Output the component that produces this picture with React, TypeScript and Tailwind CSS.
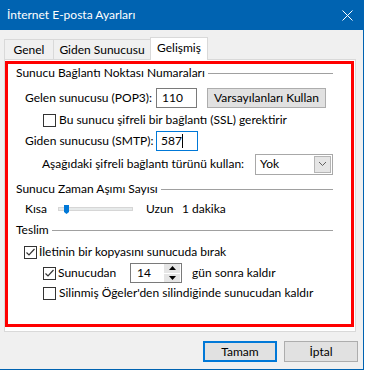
import React from "react";

function Check({ checked }: { checked?: boolean }) {
  return (
    <div className="w-[13px] h-[13px] border border-[#333333] bg-white shrink-0 flex items-center justify-center">
      {checked && (
        <svg width="11" height="11" viewBox="0 0 11 11">
          <polyline points="1.5,5.5 4,8 9.5,2" fill="none" stroke="#333333" strokeWidth="1.2" />
        </svg>
      )}
    </div>
  );
}

function Header({ text }: { text: string }) {
  return (
    <div className="flex items-center h-[16px] ml-[8px] mr-[18px]">
      <span className="whitespace-nowrap">{text}</span>
      <div className="flex-1 h-px bg-[#a0a0a0] ml-[3px]" />
    </div>
  );
}

export default function App() {
  return (
    <div className="w-[365px] h-[371px] bg-white text-[12px] text-black leading-[16px] [font-family:Lato,sans-serif]">
      <div className="w-[364px] h-[370px] bg-[#f0f0f0] border-r border-b border-[#0063b1] flex flex-col">
        {/* Title bar */}
        <div className="h-[30px] bg-[#0063b1] flex items-center justify-between pl-[7px] pr-[10px] text-white">
          <span className="text-[12px]">İnternet E-posta Ayarları</span>
          <svg width="11" height="11" viewBox="0 0 11 11">
            <line x1="0.5" y1="0.5" x2="10.5" y2="10.5" stroke="white" strokeWidth="1" />
            <line x1="10.5" y1="0.5" x2="0.5" y2="10.5" stroke="white" strokeWidth="1" />
          </svg>
        </div>

        <div className="pl-[4px] pt-[7px] flex flex-col">
          {/* Tabs */}
          <div className="flex items-end h-[22px] relative z-10">
            <div className="w-[50px] h-[20px] border-l border-t border-r border-[#d9d9d9] flex items-center justify-center">
              Genel
            </div>
            <div className="w-[97px] h-[20px] border-t border-r border-[#d9d9d9] flex items-center justify-center">
              Giden Sunucusu
            </div>
            <div className="w-[58px] h-[23px] -ml-px -mb-px border-l border-t border-r border-[#d9d9d9] bg-white flex items-center justify-center pb-[3px]">
              Gelişmiş
            </div>
          </div>

          {/* Panel */}
          <div className="w-[352px] h-[273px] border border-[#d9d9d9] bg-white pt-px">
            <div className="w-[349px] h-[266px] border-[3px] border-[#ff0000] flex flex-col">
              <div className="mt-px">
                <Header text="Sunucu Bağlantı Noktası Numaraları" />
              </div>

              {/* Gelen */}
              <div className="mt-[7px] flex items-center h-[20px] pl-[17px]">
                <span className="w-[131px] whitespace-nowrap">Gelen sunucusu (POP3):</span>
                <div className="w-[41px] h-[20px] border border-[#7a7a7a] flex items-center pl-[5px]">110</div>
                <div className="ml-[10px] w-[119px] h-[20px] border border-[#adadad] bg-[#e1e1e1] flex items-center justify-center whitespace-nowrap">
                  Varsayılanları Kullan
                </div>
              </div>

              {/* SSL */}
              <div className="mt-[4px] flex items-center h-[16px] pl-[35px]">
                <Check />
                <span className="ml-[3px] whitespace-nowrap">Bu sunucu şifreli bir bağlantı (SSL) gerektirir</span>
              </div>

              {/* Giden */}
              <div className="mt-[3px] flex items-center h-[20px] pl-[17px]">
                <span className="w-[131px] whitespace-nowrap">Giden sunucusu (SMTP):</span>
                <div className="w-[42px] h-[20px] border border-[#0078d7] flex items-center pl-[4px]">
                  <span>587</span>
                  <span className="w-px h-[14px] bg-black" />
                </div>
              </div>

              {/* Şifreli bağlantı */}
              <div className="mt-[3px] flex items-center h-[20px] pl-[34px]">
                <span className="w-[213px] whitespace-nowrap">Aşağıdaki şifreli bağlantı türünü kullan:</span>
                <div className="w-[78px] h-[21px] border border-[#a8a8a8] bg-white flex items-center justify-between pl-[4px] pr-px">
                  <span>Yok</span>
                  <div className="w-[17px] h-[17px] bg-[#e5e5e5] border border-[#b5b5b5] flex items-center justify-center">
                    <svg width="9" height="6" viewBox="0 0 9 6">
                      <polyline points="1,1 4.5,4.5 8,1" fill="none" stroke="#606060" strokeWidth="1" />
                    </svg>
                  </div>
                </div>
              </div>

              <div className="mt-[7px]">
                <Header text="Sunucu Zaman Aşımı Sayısı" />
              </div>

              {/* Slider */}
              <div className="mt-[4px] flex items-center h-[16px] pl-[17px]">
                <span className="w-[33px]">Kısa</span>
                <div className="w-[75px] h-[16px] relative flex items-center">
                  <div className="w-full h-[4px] bg-[#e7eaea] border border-[#d6d6d6]" />
                  <svg className="absolute left-[6px] top-[4px]" width="5" height="9" viewBox="0 0 5 9">
                    <polygon points="0,0 5,0 5,7 2.5,9 0,7" fill="#0078d7" />
                  </svg>
                </div>
                <span className="ml-[13px] w-[36px]">Uzun</span>
                <span>1 dakika</span>
              </div>

              <div className="mt-[5px]">
                <Header text="Teslim" />
              </div>

              {/* İletinin */}
              <div className="mt-[6px] flex items-center h-[16px] pl-[16px]">
                <Check checked />
                <span className="ml-[2px] whitespace-nowrap">İletinin bir kopyasını sunucuda bırak</span>
              </div>

              {/* Sunucudan */}
              <div className="mt-[3px] flex items-center h-[20px] pl-[35px]">
                <Check checked />
                <span className="ml-[2px] w-[72px]">Sunucudan</span>
                <div className="w-[52px] h-[20px] border border-[#7a7a7a] bg-white flex items-center justify-between pl-[6px] pr-px">
                  <span>14</span>
                  <div className="w-[16px] h-[18px] flex flex-col gap-px">
                    <div className="flex-1 bg-[#e5e5e5] flex items-center justify-center">
                      <svg width="7" height="4" viewBox="0 0 7 4"><polygon points="0,4 3.5,0 7,4" fill="#000" /></svg>
                    </div>
                    <div className="flex-1 bg-[#e5e5e5] flex items-center justify-center">
                      <svg width="7" height="4" viewBox="0 0 7 4"><polygon points="0,0 3.5,4 7,0" fill="#000" /></svg>
                    </div>
                  </div>
                </div>
                <span className="ml-[10px] whitespace-nowrap">gün sonra kaldır</span>
              </div>

              {/* Silinmiş */}
              <div className="mt-[2px] flex items-center h-[16px] pl-[35px]">
                <Check />
                <span className="ml-[3px] whitespace-nowrap">Silinmiş Öğeler'den silindiğinde sunucudan kaldır</span>
              </div>
            </div>
          </div>

          {/* Buttons */}
          <div className="mt-[9px] flex pl-[199px] gap-[7px]">
            <div className="w-[74px] h-[21px] border-2 border-[#0078d7] bg-[#e1e1e1] flex items-center justify-center">Tamam</div>
            <div className="w-[74px] h-[21px] border border-[#adadad] bg-[#e1e1e1] flex items-center justify-center">İptal</div>
          </div>
        </div>
      </div>
    </div>
  );
}
